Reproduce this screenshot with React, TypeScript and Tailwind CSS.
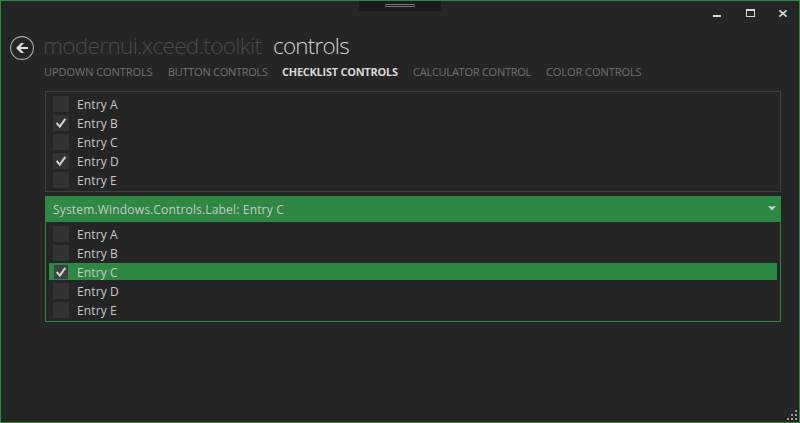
import React from "react";

function Check() {
  return (
    <svg width="12" height="12" viewBox="0 0 12 12" fill="none">
      <path d="M1.6 5.8L4.8 9.6L10.3 1.8" stroke="#d1d1d1" strokeWidth="2" />
    </svg>
  );
}

type EntryProps = { name: string; checked?: boolean; selected?: boolean };

function Entry({ name, checked, selected }: EntryProps) {
  return (
    <li className={`flex h-[19px] items-start ${selected ? "" : "px-1 pt-px"}`}>
      <div className={`flex flex-1 items-start ${selected ? "h-[17px] bg-[#2d8843] px-1" : "h-4"}`}>
        <span
          className={`flex shrink-0 items-center justify-center ${
            selected ? "mx-px mt-[2px] size-[14px] bg-[#3f3f46]" : "size-4 bg-[#333333]"
          }`}
        >
          {checked && <Check />}
        </span>
        <span
          className={`ml-2 text-[12px] leading-4 tracking-[0.12px] whitespace-nowrap ${selected ? "mt-[2px]" : "mt-px"}`}
        >
          {name}
        </span>
      </div>
    </li>
  );
}

const tabs = [
  { name: "UPDOWN CONTROLS", box: "w-[124px] tracking-[-0.04px]" },
  { name: "BUTTON CONTROLS", box: "w-[114px] tracking-[-0.28px]" },
  { name: "CHECKLIST CONTROLS", box: "w-[131px] tracking-[-0.26px] font-bold text-[#d8d8d8]" },
  { name: "CALCULATOR CONTROL", box: "w-[133px] tracking-[-0.24px]" },
  { name: "COLOR CONTROLS", box: "w-[100px] tracking-[-0.06px]" },
];

export default function App() {
  return (
    <div className="relative flex h-[423px] w-[800px] flex-col overflow-hidden border border-[#2d8843] bg-[#252526] font-['Open_Sans','Noto_Sans',sans-serif] text-[#c8c8c8]">
      <div className="absolute -top-px left-[358px] flex h-[11px] w-[82px] flex-col items-center gap-px bg-[#1b1b1c] pt-1">
        <i className="h-px w-[30px] bg-[#757575]" />
        <i className="h-px w-[30px] bg-[#757575]" />
      </div>

      <header className="flex h-[34px] justify-end pt-2 pr-[10px]">
        <svg width="76" height="9" viewBox="0 0 76 9" fill="none" shapeRendering="crispEdges">
          <path d="M0 6h8v2H0z" fill="#d8d8d8" />
          <path d="M33 0h9v8h-9zM34 2v5h7V2z" fill="#d8d8d8" fillRule="evenodd" />
          <path d="M66.4 1.3L73.6 7.7M73.6 1.3L66.4 7.7" stroke="#d8d8d8" strokeWidth="1.8" shapeRendering="auto" />
        </svg>
      </header>

      <div className="flex h-[28px] items-start pl-[9px]">
        <svg className="mt-px shrink-0" width="24" height="24" viewBox="0 0 24 24" fill="none">
          <circle cx="12" cy="12" r="11.4" stroke="#a8a8a8" strokeWidth="1.1" />
          <path d="M18 12H8" stroke="#dedede" strokeWidth="2" />
          <path d="M11 7H14L9.5 12L14 17H11L6 12z" fill="#dedede" />
        </svg>
        <h1 className="ml-[9px] flex text-[22.5px] leading-[22px] font-light whitespace-nowrap">
          <span className="w-[230px] tracking-[-0.64px] text-[#4b4b4b]">modernui.xceed.toolkit</span>
          <span className="tracking-[-0.8px] text-[#d1d1d1]">controls</span>
        </h1>
      </div>

      <nav className="flex h-[28px] pl-[43px] text-[11px] leading-[18px] whitespace-nowrap text-[#717171]">
        {tabs.map((t) => (
          <a key={t.name} className={t.box}>{t.name}</a>
        ))}
      </nav>

      <main className="ml-[44px] w-[736px]">
        <ul className="h-[101px] border border-[#3f3f46] px-[3px] pt-[3px]">
          <Entry name="Entry A" />
          <Entry name="Entry B" checked />
          <Entry name="Entry C" />
          <Entry name="Entry D" checked />
          <Entry name="Entry E" />
        </ul>
        <section className="mt-1 h-[126px] border border-[#2d8843]">
          <div className="flex h-[25px] items-center justify-between bg-[#2d8843] pr-1 pl-[7px]">
            <span className="text-[12px] leading-4 tracking-[0.17px]">System.Windows.Controls.Label: Entry C</span>
            <svg className="-mt-0.5" width="8" height="5" viewBox="0 0 8 5">
              <path d="M0 0H2L4 1L6 0H8L4 4.5z" fill="#d1d1d1" />
            </svg>
          </div>
          <ul className="px-[3px] pt-[3px]">
            <Entry name="Entry A" />
            <Entry name="Entry B" />
            <Entry name="Entry C" checked selected />
            <Entry name="Entry D" />
            <Entry name="Entry E" />
          </ul>
        </section>
      </main>

      <svg className="absolute right-[2px] bottom-[2px]" width="10" height="10" viewBox="0 0 10 10" fill="#999999" shapeRendering="crispEdges">
        <path d="M8 0h2v2H8zM4 4h2v2H4zM8 4h2v2H8zM0 8h2v2H0zM4 8h2v2H4zM8 8h2v2H8z" />
      </svg>
    </div>
  );
}
